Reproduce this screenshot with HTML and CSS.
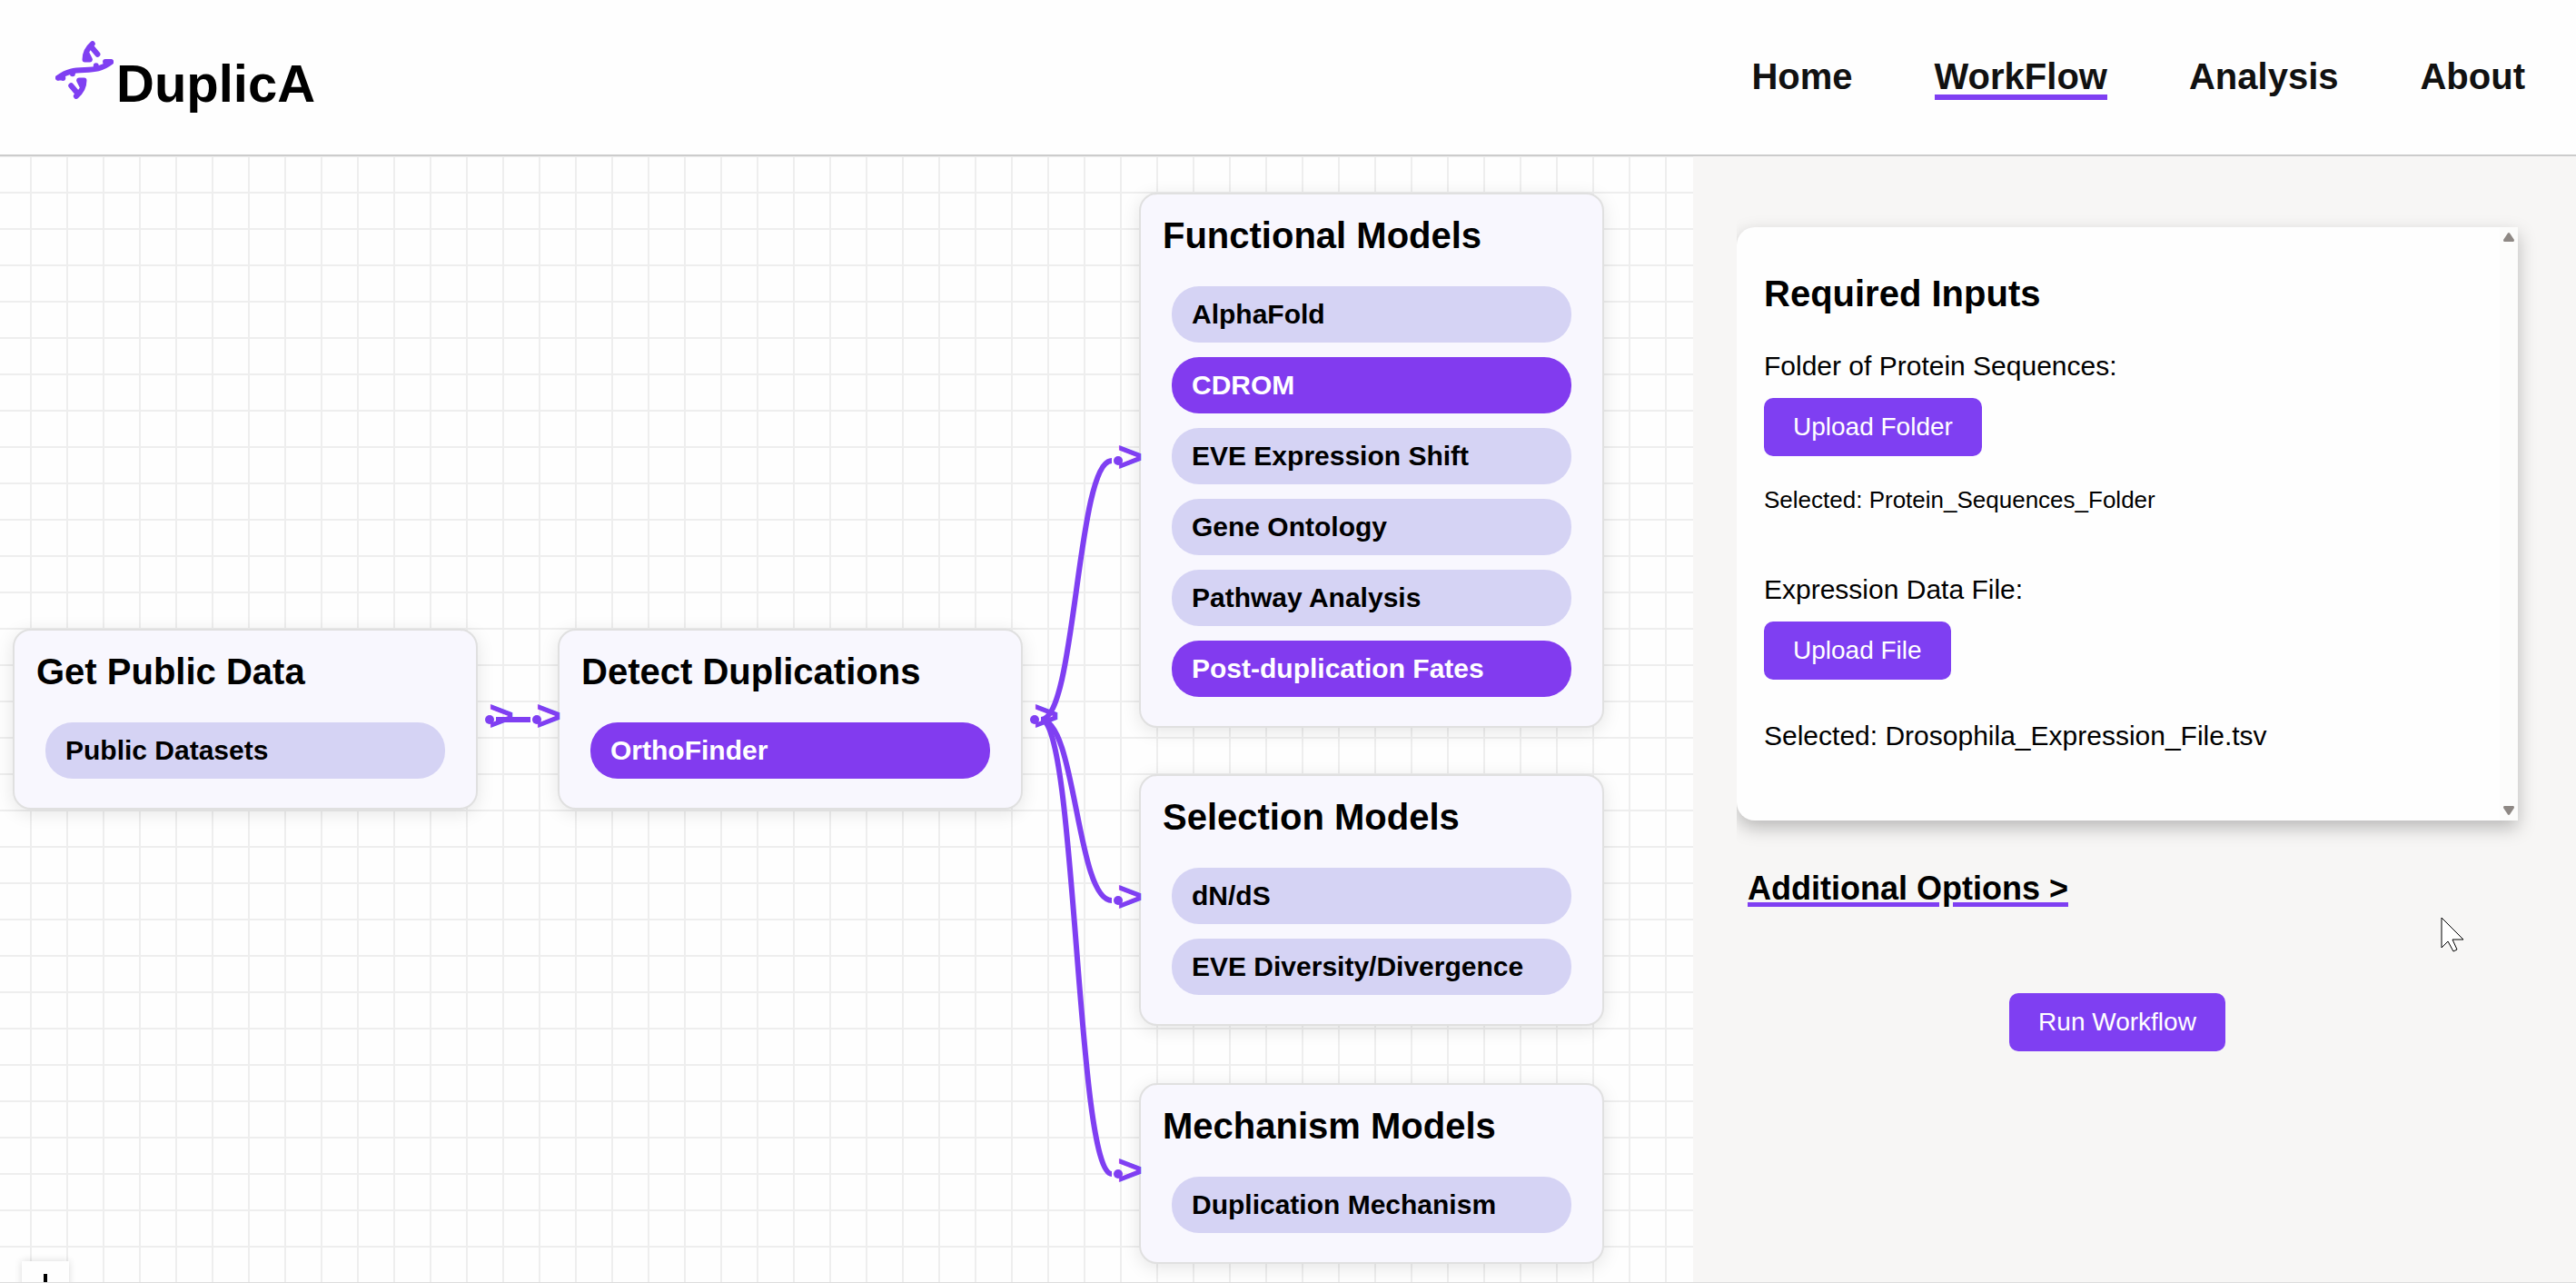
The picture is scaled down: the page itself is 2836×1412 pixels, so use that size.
FILE: index.html
```html
<!DOCTYPE html>
<html lang="en">
<head>
<meta charset="utf-8">
<title>DuplicA</title>
<link rel="stylesheet" href="styles.css">
</head>
<body>
<header class="header">
  <a class="brand" href="#">
    <svg class="brand-icon" viewBox="183 135 193 192" aria-hidden="true">
      <g fill="none" stroke="currentColor" stroke-linecap="round" stroke-linejoin="round" stroke-width="18">
        <path d="M192 257C222 234 245 232 280 231S337 228 367 205"/>
        <path d="M208 257v1M240 243v1M318 217v1M349 204h18M192 257h16"/>
        <path d="M306 144C290 158 281 176 281 196H297M302 154L323 179M288 178L297 196"/>
        <path d="M252 318C269 304 278 286 278 266H262M256 308L235 283M271 284L262 266"/>
      </g>
    </svg>
    <span class="brand-name">DuplicA</span>
  </a>
  <nav class="nav">
    <a href="#">Home</a>
    <a class="active" href="#">WorkFlow</a>
    <a href="#">Analysis</a>
    <a href="#">About</a>
  </nav>
</header>
<main class="main">
  <section class="canvas">
    <article class="node node-data">
      <h2>Get Public Data</h2>
      <button class="pill">Public Datasets</button>
    </article>
    <article class="node node-detect">
      <h2>Detect Duplications</h2>
      <button class="pill on">OrthoFinder</button>
    </article>
    <article class="node node-functional">
      <h2>Functional Models</h2>
      <button class="pill">AlphaFold</button>
      <button class="pill on">CDROM</button>
      <button class="pill">EVE Expression Shift</button>
      <button class="pill">Gene Ontology</button>
      <button class="pill">Pathway Analysis</button>
      <button class="pill on">Post-duplication Fates</button>
    </article>
    <article class="node node-selection">
      <h2>Selection Models</h2>
      <button class="pill">dN/dS</button>
      <button class="pill">EVE Diversity/Divergence</button>
    </article>
    <article class="node node-mechanism">
      <h2>Mechanism Models</h2>
      <button class="pill">Duplication Mechanism</button>
    </article>
    <svg class="edges" width="1280" height="1239">
      <g class="wires">
        <path d="M546 620H584"/>
        <path d="M1146 620C1185 620 1185 335 1224 335"/>
        <path d="M1146 620C1185 620 1185 819 1224 819"/>
        <path d="M1146 620C1185 620 1185 1120 1224 1120"/>
      </g>
      <g class="ports">
        <circle cx="539" cy="620" r="5"/>
        <circle cx="591" cy="620" r="5"/>
        <circle cx="1139" cy="620" r="5"/>
        <circle cx="1231" cy="335" r="5"/>
        <circle cx="1231" cy="819" r="5"/>
        <circle cx="1231" cy="1120" r="5"/>
        <text x="538" y="632">&gt;</text>
        <text x="590" y="632">&gt;</text>
        <text x="1138" y="632">&gt;</text>
        <text x="1230" y="347">&gt;</text>
        <text x="1230" y="831">&gt;</text>
        <text x="1230" y="1132">&gt;</text>
      </g>
    </svg>
    <button class="zoom-in" aria-label="Zoom in">
      <svg viewBox="0 0 24 24" width="24" height="24" aria-hidden="true"><path d="M12 0V24M0 12H24" stroke="#000" stroke-width="4"/></svg>
    </button>
  </section>
  <aside class="sidebar">
    <section class="panel">
      <h2>Required Inputs</h2>
      <label class="label" for="folder">Folder of Protein Sequences:</label>
      <button class="btn" id="folder">Upload Folder</button>
      <p class="picked small">Selected: Protein_Sequences_Folder</p>
      <label class="label" for="file">Expression Data File:</label>
      <button class="btn" id="file">Upload File</button>
      <p class="picked">Selected: Drosophila_Expression_File.tsv</p>
      <div class="track" aria-hidden="true">
        <svg viewBox="0 0 12 10" width="12" height="10"><path d="M6 0Q7 0 8 2L12 8Q12 10 11 10H1Q0 10 0 8L4 2Q5 0 6 0Z"/></svg>
        <svg viewBox="0 0 12 10" width="12" height="10"><path d="M6 10Q7 10 8 8L12 2Q12 0 11 0H1Q0 0 0 2L4 8Q5 10 6 10Z"/></svg>
      </div>
    </section>
    <a class="more" href="#">Additional Options &gt;</a>
    <div class="run"><button class="btn">Run Workflow</button></div>
  </aside>
  <svg class="cursor" viewBox="0 0 26 40" width="26" height="40" aria-hidden="true">
    <path d="M1 1V34L8 27L14 38L18 36L13 25H25Z" fill="#fff" stroke="#000" stroke-width="1"/>
  </svg>
</main>
</body>
</html>
```
FILE: styles.css
```css
* {
  box-sizing: border-box;
}

body {
  margin: 0;
  min-height: 100vh;
  display: flex;
  flex-direction: column;
  font-family: "Liberation Sans", Arial, sans-serif;
  font-size: 30px;
  line-height: 34px;
  color: #000;
  background: #fff;
}

h2,
p {
  margin: 0;
}

h2 {
  font-size: 40px;
  line-height: 46px;
}

button {
  font-family: inherit;
  border: 0;
  cursor: pointer;
}

/* Header */
.header {
  display: flex;
  justify-content: space-between;
  align-items: center;
  height: 172px;
  padding: 0 56px 0 61px;
  border-bottom: 2px solid #ccc;
  background: #fefefe;
}

.brand {
  display: flex;
  align-items: flex-start;
  gap: 3px;
  color: #7f3ff2;
  text-decoration: none;
}

.brand-icon {
  width: 64px;
  height: 64px;
}

.brand-name {
  padding-top: 14px;
  font-size: 58px;
  line-height: 66px;
  font-weight: bold;
  color: #000;
}

.nav {
  display: flex;
  gap: 90px;
}

.nav a {
  padding-top: 4px;
  font-size: 40px;
  line-height: 40px;
  font-weight: bold;
  color: #111;
  text-decoration: none;
  border-bottom: 6px solid transparent;
}

.nav .active {
  border-color: #7f3ff2;
}

/* Workflow canvas */
.main {
  position: relative;
  flex: 1;
  display: grid;
  grid-template-columns: 1864fr 972fr;
  border-bottom: 1px solid #ddd;
}

.canvas {
  position: relative;
  min-height: 1239px;
  overflow: hidden;
  background-color: #fefefe;
  background-image:
    linear-gradient(to right, #eee 2px, transparent 2px),
    linear-gradient(to bottom, #eee 2px, transparent 2px);
  background-size: 40px 40px;
  background-position: 33px -1px;
}

.node {
  position: absolute;
  display: flex;
  flex-direction: column;
  gap: 16px;
  width: 512px;
  padding: 22px 34px 32px;
  border: 2px solid #e0e0e0;
  border-radius: 20px;
  background: #f8f7fe;
  box-shadow: 0 4px 20px rgba(0, 0, 0, 0.1);
}

.node h2 {
  margin: 0 -10px 17px;
}

.node-data {
  left: 14px;
  top: 520px;
}

.node-detect {
  left: 614px;
  top: 520px;
}

.node-functional {
  left: 1254px;
  top: 40px;
}

.node-selection {
  left: 1254px;
  top: 680px;
}

.node-mechanism {
  left: 1254px;
  top: 1020px;
}

.pill {
  height: 62px;
  padding: 0 22px;
  border-radius: 30px;
  background: #d5d3f4;
  color: #000;
  font-size: 30px;
  font-weight: bold;
  text-align: left;
}

.pill.on {
  background: #823bef;
  color: #fff;
}

.edges {
  position: absolute;
  left: 0;
  top: 0;
}

.wires {
  fill: none;
  stroke: #7f3ff2;
  stroke-width: 6px;
}

.ports {
  fill: #7f3ff2;
  font-size: 48px;
  font-weight: bold;
}

.zoom-in {
  position: absolute;
  left: 24px;
  top: 1216px;
  width: 52px;
  height: 52px;
  padding: 14px;
  background: #fefefe;
  box-shadow: 0 0 8px rgba(0, 0, 0, 0.15);
}

.zoom-in svg {
  display: block;
}

/* Sidebar */
.sidebar {
  display: flex;
  flex-direction: column;
  padding: 78px 64px 0 48px;
  background: #f7f6f5;
}

.panel {
  position: relative;
  display: flex;
  flex-direction: column;
  align-items: flex-start;
  padding: 50px 30px 76px;
  border-radius: 20px 0 0 20px;
  background: #fefefe;
  box-shadow: 0 8px 20px rgba(0, 0, 0, 0.25);
  clip-path: inset(-40px -40px -40px 0);
}

.panel h2 {
  margin-bottom: -2px;
}

.label {
  margin: 42px 0 18px;
}

.btn {
  height: 64px;
  padding: 0 32px;
  border-radius: 10px;
  background: #7f3ff2;
  color: #fff;
  font-size: 28px;
}

.picked {
  margin-top: 45px;
}

.picked.small {
  margin: 33px 0 25px;
  font-size: 26px;
  line-height: 30px;
}

.track {
  position: absolute;
  top: 0;
  right: 0;
  bottom: 0;
  display: flex;
  flex-direction: column;
  justify-content: space-between;
  align-items: center;
  width: 20px;
  padding: 6px 0;
  background: #fcfcfb;
  fill: #8e8884;
}

.more {
  align-self: flex-start;
  margin: 54px 12px 94px;
  font-size: 36px;
  line-height: 42px;
  font-weight: bold;
  color: #000;
  text-decoration: underline #7f3ff2 5px;
  text-underline-offset: 3px;
}

.run {
  display: flex;
  justify-content: center;
  padding-right: 22px;
}

.cursor {
  position: absolute;
  left: 2687px;
  top: 837px;
}
```
